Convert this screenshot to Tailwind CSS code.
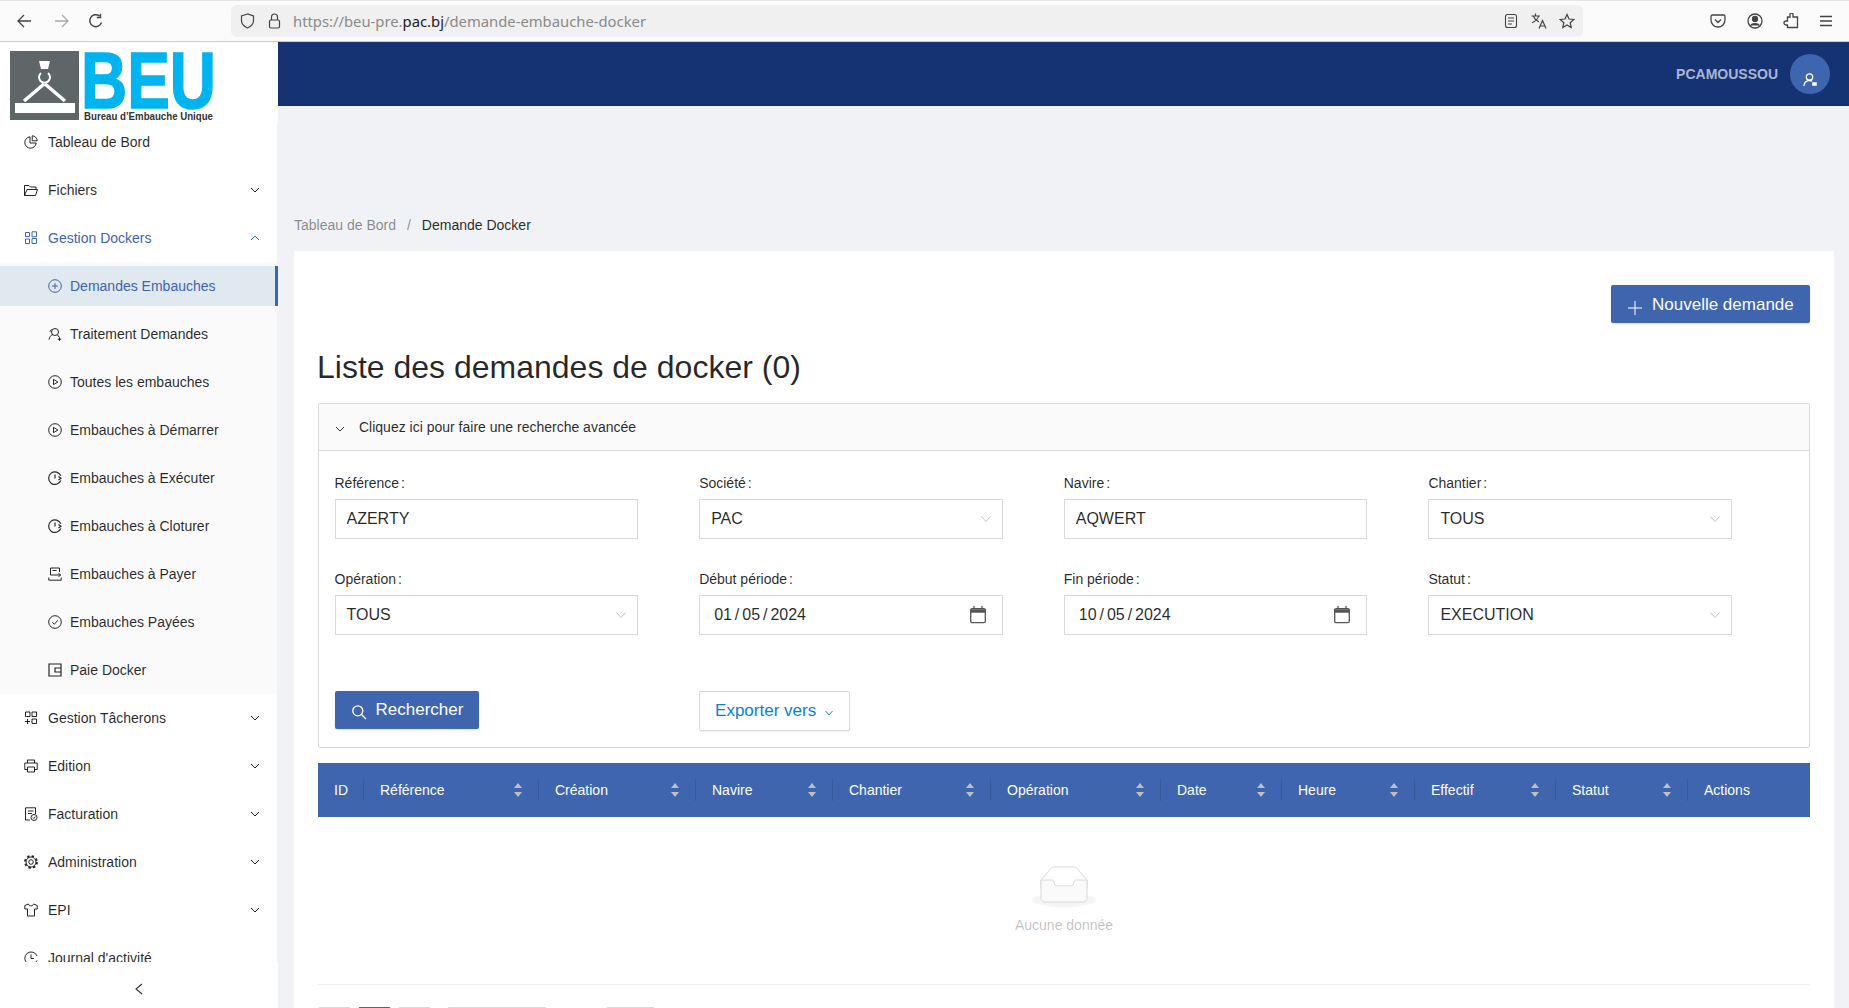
<!DOCTYPE html>
<html lang="fr">

<head>
    <meta charset="UTF-8">
    <script src="https://cdn.jsdelivr.net/npm/@tailwindcss/browser@4"></script>
    <title>Demande Docker</title>
</head>

<body class="h-screen overflow-hidden flex flex-col bg-[#f0f2f5] text-sm text-[#000000d9] font-['Liberation_Sans',Arial,sans-serif]">

    <!-- browser toolbar -->
    <div class="h-[42px] shrink-0 flex items-center bg-[#fbfbfb] border-t border-t-[#e4e4e4] border-b border-b-[#cccccc] text-[#444444]">
        <div class="w-[231px] shrink-0 flex items-center pl-4">
            <svg class="w-4 h-4" viewBox="0 0 16 16" fill="none" stroke="currentColor" stroke-width="1.3"><path d="M15 8H2M8 2 2 8l6 6"/></svg>
            <svg class="w-4 h-4 ml-[22px] text-[#aaaaaa]" viewBox="0 0 16 16" fill="none" stroke="currentColor" stroke-width="1.3"><path d="M1 8h13M8 2l6 6-6 6"/></svg>
            <svg class="w-4 h-4 ml-[18px]" viewBox="0 0 16 16" fill="none" stroke="currentColor" stroke-width="1.4"><path d="M13.5 9.5A6 6 0 1 1 11.5 3M12.5 .8v3.7H8.8"/></svg>
        </div>
        <div class="w-[1352px] h-8 shrink-0 flex items-center rounded-md bg-[#f0f0f0] pl-[9px] pr-2">
            <svg class="w-[15px] h-4 shrink-0" viewBox="0 0 15 16" fill="none" stroke="currentColor" stroke-width="1.2"><path d="M7.5 1 1.500 3v4.500c0 3.500 2.500 6 6 7.500 3.500-1.500 6-4 6-7.500V3z"/></svg>
            <svg class="w-[13px] h-4 ml-[13px] shrink-0" viewBox="0 0 13 16" fill="none" stroke="currentColor" stroke-width="1.2"><rect x="1.500" y="7" width="10" height="8" rx="1.500"/><path d="M3.500 7V4a3 3 0 0 1 6 0v3"/></svg>
            <span class="ml-[12px] mt-px text-[14.800px] text-[#8a8a8a] font-['Noto_Sans',sans-serif]">https://beu-pre.<span class="text-[#1c1c1c]">pac.bj</span>/demande-embauche-docker</span>
            <svg class="w-[14px] h-4 ml-auto" viewBox="0 0 14 16" fill="none" stroke="currentColor" stroke-width="1.100"><rect x="1.500" y="1.500" width="11" height="13" rx="2"/><path d="M4 5h6M4 8h6M4 11h4"/></svg>
            <svg class="w-4 h-4 ml-[13px]" viewBox="0 0 16 16" fill="none" stroke="currentColor" stroke-width="1.200"><path d="M.5 3h8.500M4.500 .5V3M7.500 3C7 6 4 8.500 1 9.800M2.500 3.500c1 2.500 3 4.500 5.500 5.500M8 15.500l3.500-8 3.500 8M9 13h5"/></svg>
            <svg class="w-4 h-4 ml-[12px]" viewBox="0 0 16 16" fill="none" stroke="currentColor" stroke-width="1.200"><path d="M8 1.500 10 6l4.800.5-3.600 3.200 1 4.800L8 12l-4.200 2.500 1-4.800L1.200 6.500 6 6z"/></svg>
        </div>
        <div class="flex-1 flex items-center pl-[127px]">
            <svg class="w-4 h-4" viewBox="0 0 16 16" fill="none" stroke="currentColor" stroke-width="1.300"><path d="M2.500 2h11A1.500 1.500 0 0 1 15 3.500V7a7 7 0 0 1-14 0V3.500A1.500 1.500 0 0 1 2.500 2zM5 6.500l3 3 3-3"/></svg>
            <svg class="w-4 h-4 ml-[21px]" viewBox="0 0 16 16" fill="none" stroke="currentColor" stroke-width="1.300"><circle cx="8" cy="8" r="7"/><circle cx="8" cy="6" r="2.500" fill="currentColor"/><path d="M3.500 12.500C5 10 11 10 12.500 12.500" fill="currentColor"/></svg>
            <svg class="w-4 h-4 ml-[20px]" viewBox="0 0 16 16" fill="none" stroke="currentColor" stroke-width="1.300"><path d="M7 1.500a1.500 1.500 0 0 1 3 0V4h4.500v10.500h-10V12H3a2 2 0 0 1 0-4h1.500V4H7z"/></svg>
            <svg class="w-4 h-4 ml-[19px]" viewBox="0 0 16 16" fill="none" stroke="currentColor" stroke-width="1.300"><path d="M2 3.500h12M2 8h12M2 12.500h12"/></svg>
        </div>
    </div>

    <div class="flex-1 flex min-h-0">

        <!-- sidebar -->
        <aside class="w-[278px] shrink-0 flex flex-col bg-white">
            <div class="h-[80px] shrink-0">
                <svg class="overflow-visible" width="230" height="80" viewBox="0 0 230 80">
                    <rect x="10" y="9" width="69" height="69" fill="#5f6668"/>
                    <path d="M39 19h11l-2 8h-7z" fill="#fff"/>
                    <path d="M48 31a5.500 5.500 0 1 1-7 0" fill="none" stroke="#fff" stroke-width="2"/>
                    <path d="M44 42 24 59M45 42l20 17" stroke="#fff" stroke-width="3.500"/>
                    <rect x="15" y="61" width="60" height="10" fill="#fff"/>
                    <text x="81" y="66" font-size="79" font-weight="700" fill="#00b4f0" stroke="#00b4f0" stroke-width="1.500" textLength="135" lengthAdjust="spacingAndGlyphs">BEU</text>
                    <text x="84" y="78" font-size="10" font-weight="700" fill="#333333" textLength="129" lengthAdjust="spacingAndGlyphs">Bureau d’Embauche Unique</text>
                </svg>
            </div>

            <nav class="flex-1 min-h-0 overflow-hidden flex flex-col shadow-[inset_-1px_0_0_#f0f2f5]">
                <a class="h-10 shrink-0 mb-1 flex items-center pl-6 pr-[18px] gap-[10px]">
                    <svg class="w-[14px] h-[14px]" viewBox="0 0 14 14" fill="none" stroke="currentColor"><path d="M6 1.800a5.700 5.700 0 1 0 6.200 6.200H6zM8.200 .8v5h5a5 5 0 0 0-5-5z"/></svg>
                    Tableau de Bord
                </a>
                <a class="h-10 shrink-0 my-1 flex items-center pl-6 pr-[18px] gap-[10px]">
                    <svg class="w-[14px] h-[14px]" viewBox="0 0 14 14" fill="none" stroke="currentColor"><path d="M.5 12.500v-10h4.500l1.500 1.500h5.500v2M.5 12.500h11l2-6H3z"/></svg>
                    <span class="flex-1">Fichiers</span>
                    <svg class="w-[10px] h-[10px]" viewBox="0 0 10 10" fill="none" stroke="currentColor"><path d="m1 3 4 4 4-4"/></svg>
                </a>
                <a class="h-10 shrink-0 my-1 flex items-center pl-6 pr-[18px] gap-[10px] text-[#3e65ae]">
                    <svg class="w-[14px] h-[14px]" viewBox="0 0 14 14" fill="none" stroke="currentColor"><path d="M1.500 1.500h4v4h-4zM1.500 8h4v4.500h-4zM8 .8h4.500v5H8zM8 7.500h4.500v5H8z"/></svg>
                    <span class="flex-1">Gestion Dockers</span>
                    <svg class="w-[10px] h-[10px]" viewBox="0 0 10 10" fill="none" stroke="currentColor"><path d="m1 7 4-4 4 4"/></svg>
                </a>

                <div class="shrink-0 mr-px flex flex-col bg-[#fafafa]">
                    <a class="h-10 shrink-0 my-1 -mr-px flex items-center pl-12 gap-2 bg-[#e0e8f0] text-[#3e65ae] border-r-[3px] border-[#3e65ae]">
                        <svg class="w-[14px] h-[14px]" viewBox="0 0 14 14" fill="none" stroke="currentColor"><circle cx="7" cy="7" r="6.300"/><path d="M7 4v6M4 7h6"/></svg>
                        Demandes Embauches
                    </a>
                    <a class="h-10 shrink-0 my-1 flex items-center pl-12 gap-2">
                        <svg class="w-[14px] h-[14px]" viewBox="0 0 14 14" fill="none" stroke="currentColor"><circle cx="7" cy="5" r="3.500"/><path d="M1 12.500c.5-2.500 2-4.500 3.800-5M9.500 8l2 2.500M11.500 10.500v3.300M9.800 12.200h3.500M3.500 2.500C2.500 3 2 4 2 5"/></svg>
                        Traitement Demandes
                    </a>
                    <a class="h-10 shrink-0 my-1 flex items-center pl-12 gap-2">
                        <svg class="w-[14px] h-[14px]" viewBox="0 0 14 14" fill="none" stroke="currentColor"><circle cx="7" cy="7" r="6.300"/><path d="M5.500 4.300v5.400L9.800 7z"/></svg>
                        Toutes les embauches
                    </a>
                    <a class="h-10 shrink-0 my-1 flex items-center pl-12 gap-2">
                        <svg class="w-[14px] h-[14px]" viewBox="0 0 14 14" fill="none" stroke="currentColor"><circle cx="7" cy="7" r="6.300"/><path d="M5.500 4.300v5.400L9.800 7z"/></svg>
                        Embauches à Démarrer
                    </a>
                    <a class="h-10 shrink-0 my-1 flex items-center pl-12 gap-2">
                        <svg class="w-[14px] h-[14px]" viewBox="0 0 14 14" fill="none" stroke="currentColor" stroke-width="1.200"><path d="M12.800 4.800A6.300 6.300 0 1 0 12.800 9.500M7 3.500v4M10.500 5.500l2.500 1.800-2.500 1.800"/></svg>
                        Embauches à Exécuter
                    </a>
                    <a class="h-10 shrink-0 my-1 flex items-center pl-12 gap-2">
                        <svg class="w-[14px] h-[14px]" viewBox="0 0 14 14" fill="none" stroke="currentColor" stroke-width="1.200"><path d="M12.800 4.800A6.300 6.300 0 1 0 12.800 9.500M7 3.500v4M10.500 5.500l2.500 1.800-2.500 1.800"/></svg>
                        Embauches à Cloturer
                    </a>
                    <a class="h-10 shrink-0 my-1 flex items-center pl-12 gap-2">
                        <svg class="w-[14px] h-[14px]" viewBox="0 0 14 14" fill="none" stroke="currentColor"><path d="M2.500 8V1h9v4M.8 10.500v2.700h12.400v-2.700M4.500 3.500h4M2.500 8h10M10.500 6l2 2-2 2"/></svg>
                        Embauches à Payer
                    </a>
                    <a class="h-10 shrink-0 my-1 flex items-center pl-12 gap-2">
                        <svg class="w-[14px] h-[14px]" viewBox="0 0 14 14" fill="none" stroke="currentColor"><circle cx="7" cy="7" r="6.300"/><path d="m4.300 7.300 2 2 3.500-4"/></svg>
                        Embauches Payées
                    </a>
                    <a class="h-10 shrink-0 my-1 flex items-center pl-12 gap-2">
                        <svg class="w-[14px] h-[14px]" viewBox="0 0 14 14" fill="none" stroke="currentColor" stroke-width="1.200"><path d="M1 1h12v12H1zM13 5H7v4h6"/></svg>
                        Paie Docker
                    </a>
                </div>

                <a class="h-10 shrink-0 my-1 flex items-center pl-6 pr-[18px] gap-[10px]">
                    <svg class="w-[14px] h-[14px]" viewBox="0 0 14 14" fill="none" stroke="currentColor"><path d="M1.500 1h4.500v4.500H1.500zM8 1h4.500v4.500H8zM8 8h4.500v4.500H8zM3.500 8v5M1 10.500h5"/></svg>
                    <span class="flex-1">Gestion Tâcherons</span>
                    <svg class="w-[10px] h-[10px]" viewBox="0 0 10 10" fill="none" stroke="currentColor"><path d="m1 3 4 4 4-4"/></svg>
                </a>
                <a class="h-10 shrink-0 my-1 flex items-center pl-6 pr-[18px] gap-[10px]">
                    <svg class="w-[14px] h-[14px]" viewBox="0 0 14 14" fill="none" stroke="currentColor"><path d="M3.500 4V1h7v3M3.500 10.500H.8V4h12.400v6.500h-2.700M3.500 8h7v5h-7z"/></svg>
                    <span class="flex-1">Edition</span>
                    <svg class="w-[10px] h-[10px]" viewBox="0 0 10 10" fill="none" stroke="currentColor"><path d="m1 3 4 4 4-4"/></svg>
                </a>
                <a class="h-10 shrink-0 my-1 flex items-center pl-6 pr-[18px] gap-[10px]">
                    <svg class="w-[14px] h-[14px]" viewBox="0 0 14 14" fill="none" stroke="currentColor"><path d="M6 13H1.500V.8h10V7M4 4h5.500M4 6.500h4"/><circle cx="10" cy="10.500" r="3"/><path d="m8.800 10.500 1 1 1.500-1.800"/></svg>
                    <span class="flex-1">Facturation</span>
                    <svg class="w-[10px] h-[10px]" viewBox="0 0 10 10" fill="none" stroke="currentColor"><path d="m1 3 4 4 4-4"/></svg>
                </a>
                <a class="h-10 shrink-0 my-1 flex items-center pl-6 pr-[18px] gap-[10px]">
                    <svg class="w-[14px] h-[14px]" viewBox="0 0 14 14" fill="none" stroke="currentColor"><circle cx="7" cy="7" r="2.300"/><circle cx="7" cy="7" r="5"/><circle cx="7" cy="7" r="6" stroke-width="1.800" stroke-dasharray="2.400 2.310"/></svg>
                    <span class="flex-1">Administration</span>
                    <svg class="w-[10px] h-[10px]" viewBox="0 0 10 10" fill="none" stroke="currentColor"><path d="m1 3 4 4 4-4"/></svg>
                </a>
                <a class="h-10 shrink-0 my-1 flex items-center pl-6 pr-[18px] gap-[10px]">
                    <svg class="w-[14px] h-[14px]" viewBox="0 0 14 14" fill="none" stroke="currentColor"><path d="M4.500 1 .8 2.500v3.500h2.700v7h7V6h2.700V2.500L9.500 1C9 3.500 5 3.500 4.500 1z"/></svg>
                    <span class="flex-1">EPI</span>
                    <svg class="w-[10px] h-[10px]" viewBox="0 0 10 10" fill="none" stroke="currentColor"><path d="m1 3 4 4 4-4"/></svg>
                </a>
                <a class="h-10 shrink-0 my-1 flex items-center pl-6 pr-[18px] gap-[10px]">
                    <svg class="w-[14px] h-[14px]" viewBox="0 0 14 14" fill="none" stroke="currentColor"><path d="M13 5A6.300 6.300 0 1 0 13 9.500M7 3.500V7.500h3"/></svg>
                    Journal d'activité
                </a>
            </nav>

            <div class="h-[46px] shrink-0 flex items-center justify-center bg-white">
                <svg class="w-[10px] h-3 mt-2" viewBox="0 0 10 12" fill="none" stroke="#333333" stroke-width="1.100"><path d="M8 1 2 6l6 5"/></svg>
            </div>
        </aside>

        <div class="flex-1 min-w-0 overflow-hidden">
            <!-- top bar -->
            <header class="h-16 flex items-center justify-end bg-[#153273] pr-[19px]">
                <span class="font-bold text-[#a9b6d3]">PCAMOUSSOU</span>
                <span class="w-10 h-10 ml-3 rounded-full bg-[#3e65ae] flex items-center justify-center">
                    <svg class="w-[14px] h-[14px] mt-3" viewBox="0 0 14 14" fill="none" stroke="#ffffff" stroke-width="1.300"><circle cx="6.500" cy="4" r="3.200"/><path d="M.8 13c.5-3.500 2.500-5.500 5.700-5.500 1 0 2 .3 2.700.8"/><path d="M9.500 9.500h4v3h-4z" fill="#ffffff" stroke-width=".5"/></svg>
                </span>
            </header>

            <div class="pl-4 pr-[15px]">
                <div class="h-[22px] mt-[108px] mb-[15px] flex items-center text-[#00000073]">
                    Tableau de Bord
                    <span class="mx-[11px]">/</span>
                    <span class="text-[#000000d9]">Demande Docker</span>
                </div>

                <!-- main card -->
                <section class="bg-white pl-6 pr-6 pt-[34px]">
                    <div class="flex justify-end">
                        <button class="h-[38px] w-[199px] flex items-center pl-[17px] rounded-[2px] bg-[#3e65ae] text-white text-[17px] shadow-sm">
                            <svg class="w-[14px] h-[14px] mt-2" viewBox="0 0 14 14" fill="none" stroke="#ffffff"><path d="M7 0v14M0 7h14"/></svg>
                            <span class="ml-[10px] mt-[2px]">Nouvelle demande</span>
                        </button>
                    </div>

                    <h1 class="mt-5 mb-3 text-[32px] leading-[48px] font-normal -ml-px">Liste des demandes de docker (0)</h1>

                    <!-- search panel -->
                    <div class="border border-[#d9d9d9] rounded-[2px]">
                        <div class="h-[47px] flex items-center pl-4 bg-[#fafafa] border-b border-[#d9d9d9]">
                            <svg class="w-[10px] h-[10px] mt-1" viewBox="0 0 10 10" fill="none" stroke="#333333"><path d="m1 3 4 4 4-4"/></svg>
                            <span class="ml-[14px]">Cliquez ici pour faire une recherche avancée</span>
                        </div>
                        <div class="pt-[21px] pl-[15.500px] pr-4 pb-4">
                            <div class="grid grid-cols-4 gap-y-[29px]">
                                <label class="w-[303.500px] flex flex-col">
                                    <span class="h-[22px] mb-[5px] leading-[22px]">Référence<span class="ml-[2px]">:</span></span>
                                    <input class="h-10 px-[11px] border border-[#d9d9d9] text-base outline-none" value="AZERTY" readonly>
                                </label>
                                <div class="w-[303.500px] flex flex-col">
                                    <span class="h-[22px] mb-[5px] leading-[22px]">Société<span class="ml-[2px]">:</span></span>
                                    <div class="h-10 pl-[11px] pr-[10px] border border-[#d9d9d9] text-base flex items-center justify-between">
                                        PAC
                                        <svg class="w-[12px] h-[12px]" viewBox="0 0 12 12" fill="none" stroke="#bfbfbf"><path d="m1.500 3.500 4.500 5 4.500-5"/></svg>
                                    </div>
                                </div>
                                <label class="w-[303.500px] flex flex-col">
                                    <span class="h-[22px] mb-[5px] leading-[22px]">Navire<span class="ml-[2px]">:</span></span>
                                    <input class="h-10 px-[11px] border border-[#d9d9d9] text-base outline-none" value="AQWERT" readonly>
                                </label>
                                <div class="w-[303.500px] flex flex-col">
                                    <span class="h-[22px] mb-[5px] leading-[22px]">Chantier<span class="ml-[2px]">:</span></span>
                                    <div class="h-10 pl-[11px] pr-[10px] border border-[#d9d9d9] text-base flex items-center justify-between">
                                        TOUS
                                        <svg class="w-[12px] h-[12px]" viewBox="0 0 12 12" fill="none" stroke="#bfbfbf"><path d="m1.500 3.500 4.500 5 4.500-5"/></svg>
                                    </div>
                                </div>

                                <div class="w-[303.500px] flex flex-col">
                                    <span class="h-[22px] mb-[5px] leading-[22px]">Opération<span class="ml-[2px]">:</span></span>
                                    <div class="h-10 pl-[11px] pr-[10px] border border-[#d9d9d9] text-base flex items-center justify-between">
                                        TOUS
                                        <svg class="w-[12px] h-[12px]" viewBox="0 0 12 12" fill="none" stroke="#bfbfbf"><path d="m1.500 3.500 4.500 5 4.500-5"/></svg>
                                    </div>
                                </div>
                                <div class="w-[303.500px] flex flex-col">
                                    <span class="h-[22px] mb-[5px] leading-[22px]">Début période<span class="ml-[2px]">:</span></span>
                                    <div class="h-10 pl-[14px] pr-4 border border-[#d9d9d9] text-base flex items-center justify-between">
                                        <span class="[word-spacing:-1.500px]">01 / 05 / 2024</span>
                                        <svg class="w-4 h-[18px]" viewBox="0 0 16 18" fill="none" stroke="#555555" stroke-width="1.300"><rect x=".7" y="2.700" width="14.600" height="14" rx="1.500"/><path d="M.7 4h14.600v2H.7z" fill="#555555"/><path d="M4 0v3M12 0v3"/></svg>
                                    </div>
                                </div>
                                <div class="w-[303.500px] flex flex-col">
                                    <span class="h-[22px] mb-[5px] leading-[22px]">Fin période<span class="ml-[2px]">:</span></span>
                                    <div class="h-10 pl-[14px] pr-4 border border-[#d9d9d9] text-base flex items-center justify-between">
                                        <span class="[word-spacing:-1.500px]">10 / 05 / 2024</span>
                                        <svg class="w-4 h-[18px]" viewBox="0 0 16 18" fill="none" stroke="#555555" stroke-width="1.300"><rect x=".7" y="2.700" width="14.600" height="14" rx="1.500"/><path d="M.7 4h14.600v2H.7z" fill="#555555"/><path d="M4 0v3M12 0v3"/></svg>
                                    </div>
                                </div>
                                <div class="w-[303.500px] flex flex-col">
                                    <span class="h-[22px] mb-[5px] leading-[22px]">Statut<span class="ml-[2px]">:</span></span>
                                    <div class="h-10 pl-[11px] pr-[10px] border border-[#d9d9d9] text-base flex items-center justify-between">
                                        EXECUTION
                                        <svg class="w-[12px] h-[12px]" viewBox="0 0 12 12" fill="none" stroke="#bfbfbf"><path d="m1.500 3.500 4.500 5 4.500-5"/></svg>
                                    </div>
                                </div>
                            </div>

                            <div class="grid grid-cols-4 mt-14">
                                <div>
                                    <button class="h-[38px] w-[144px] flex items-center pl-4 rounded-[2px] bg-[#3e65ae] text-white text-[17px] shadow-sm">
                                        <svg class="w-[16px] h-[16px] mt-1" viewBox="0 0 16 16" fill="none" stroke="#ffffff" stroke-width="1.300"><circle cx="6.800" cy="6.800" r="5"/><path d="m10.500 10.500 4.500 4.500"/></svg>
                                        <span class="ml-[9px] mt-px">Rechercher</span>
                                    </button>
                                </div>
                                <div>
                                    <button class="h-10 w-[151px] flex items-center justify-center gap-2 rounded-[2px] bg-white border border-[#d9d9d9] text-[#0a7fdc] text-[17px] shadow-[0_1px_1px_rgba(0,0,0,0.05)]">
                                        <span class="mt-px">Exporter vers</span>
                                        <svg class="w-[10px] h-[10px] mt-1" viewBox="0 0 10 10" fill="none" stroke="#0a7fdc"><path d="m1.500 3 3.500 4 3.500-4"/></svg>
                                    </button>
                                </div>
                            </div>
                        </div>
                    </div>

                    <!-- table -->
                    <div class="mt-[15px] h-[54px] grid grid-cols-[46px_175px_157px_137px_158px_170px_121px_133px_141px_132px_122px] items-center bg-[#3e65ae] text-white">
                        <div class="h-[22px] pl-4 border-r border-black/10 flex items-center">ID</div>
                        <div class="h-[22px] pl-4 pr-4 border-r border-black/10 flex items-center justify-between">Référence
                            <svg class="w-2 h-[14px]" viewBox="0 0 8 14" fill="#bfbfbf"><path d="M4 0l4 5H0zM4 14 0 9h8z"/></svg></div>
                        <div class="h-[22px] pl-4 pr-4 border-r border-black/10 flex items-center justify-between">Création
                            <svg class="w-2 h-[14px]" viewBox="0 0 8 14" fill="#bfbfbf"><path d="M4 0l4 5H0zM4 14 0 9h8z"/></svg></div>
                        <div class="h-[22px] pl-4 pr-4 border-r border-black/10 flex items-center justify-between">Navire
                            <svg class="w-2 h-[14px]" viewBox="0 0 8 14" fill="#bfbfbf"><path d="M4 0l4 5H0zM4 14 0 9h8z"/></svg></div>
                        <div class="h-[22px] pl-4 pr-4 border-r border-black/10 flex items-center justify-between">Chantier
                            <svg class="w-2 h-[14px]" viewBox="0 0 8 14" fill="#bfbfbf"><path d="M4 0l4 5H0zM4 14 0 9h8z"/></svg></div>
                        <div class="h-[22px] pl-4 pr-4 border-r border-black/10 flex items-center justify-between">Opération
                            <svg class="w-2 h-[14px]" viewBox="0 0 8 14" fill="#bfbfbf"><path d="M4 0l4 5H0zM4 14 0 9h8z"/></svg></div>
                        <div class="h-[22px] pl-4 pr-4 border-r border-black/10 flex items-center justify-between">Date
                            <svg class="w-2 h-[14px]" viewBox="0 0 8 14" fill="#bfbfbf"><path d="M4 0l4 5H0zM4 14 0 9h8z"/></svg></div>
                        <div class="h-[22px] pl-4 pr-4 border-r border-black/10 flex items-center justify-between">Heure
                            <svg class="w-2 h-[14px]" viewBox="0 0 8 14" fill="#bfbfbf"><path d="M4 0l4 5H0zM4 14 0 9h8z"/></svg></div>
                        <div class="h-[22px] pl-4 pr-4 border-r border-black/10 flex items-center justify-between">Effectif
                            <svg class="w-2 h-[14px]" viewBox="0 0 8 14" fill="#bfbfbf"><path d="M4 0l4 5H0zM4 14 0 9h8z"/></svg></div>
                        <div class="h-[22px] pl-4 pr-4 border-r border-black/10 flex items-center justify-between">Statut
                            <svg class="w-2 h-[14px]" viewBox="0 0 8 14" fill="#bfbfbf"><path d="M4 0l4 5H0zM4 14 0 9h8z"/></svg></div>
                        <div class="h-[22px] pl-4 flex items-center">Actions</div>
                    </div>

                    <div class="h-[168px] flex flex-col items-center pt-[49px] border-b border-[#f0f0f0]">
                        <svg width="64" height="41" viewBox="0 0 64 41">
                            <g transform="translate(0 1)" fill="none" fill-rule="evenodd">
                                <ellipse fill="#f5f5f5" cx="32" cy="33" rx="32" ry="7"/>
                                <g fill-rule="nonzero" stroke="#d9d9d9">
                                    <path d="M55 12.760L44.854 1.258C44.367.474 43.656 0 42.907 0H21.093c-.749 0-1.460.474-1.947 1.257L9 12.761V22h46v-9.240z"/>
                                    <path d="M41.613 15.931c0-1.605.994-2.930 2.227-2.931H55v18.137C55 33.260 53.680 35 52.050 35h-40.100C10.320 35 9 33.259 9 31.137V13h11.160c1.233 0 2.227 1.323 2.227 2.928v.022c0 1.605 1.005 2.901 2.237 2.901h14.752c1.232 0 2.237-1.308 2.237-2.913v-.007z" fill="#fafafa"/>
                                </g>
                            </g>
                        </svg>
                        <span class="mt-2 text-[#00000040]">Aucune donnée</span>
                    </div>

                    <!-- pagination, only its top edge is on screen -->
                    <div class="mt-[22px] h-8 flex">
                        <span class="w-[33px] h-8 border border-[#d9d9d9] rounded-[2px]"></span>
                        <span class="w-[33px] h-8 ml-[7px] border border-[#3e65ae] bg-[#3e65ae] rounded-[2px]"></span>
                        <span class="w-[33px] h-8 ml-[7px] border border-[#d9d9d9] rounded-[2px]"></span>
                        <span class="w-[100px] h-8 ml-4 border border-[#d9d9d9] rounded-[2px]"></span>
                        <span class="w-[49px] h-8 ml-[59px] border border-[#d9d9d9] rounded-[2px]"></span>
                    </div>
                </section>
            </div>
        </div>
    </div>
</body>

</html>
